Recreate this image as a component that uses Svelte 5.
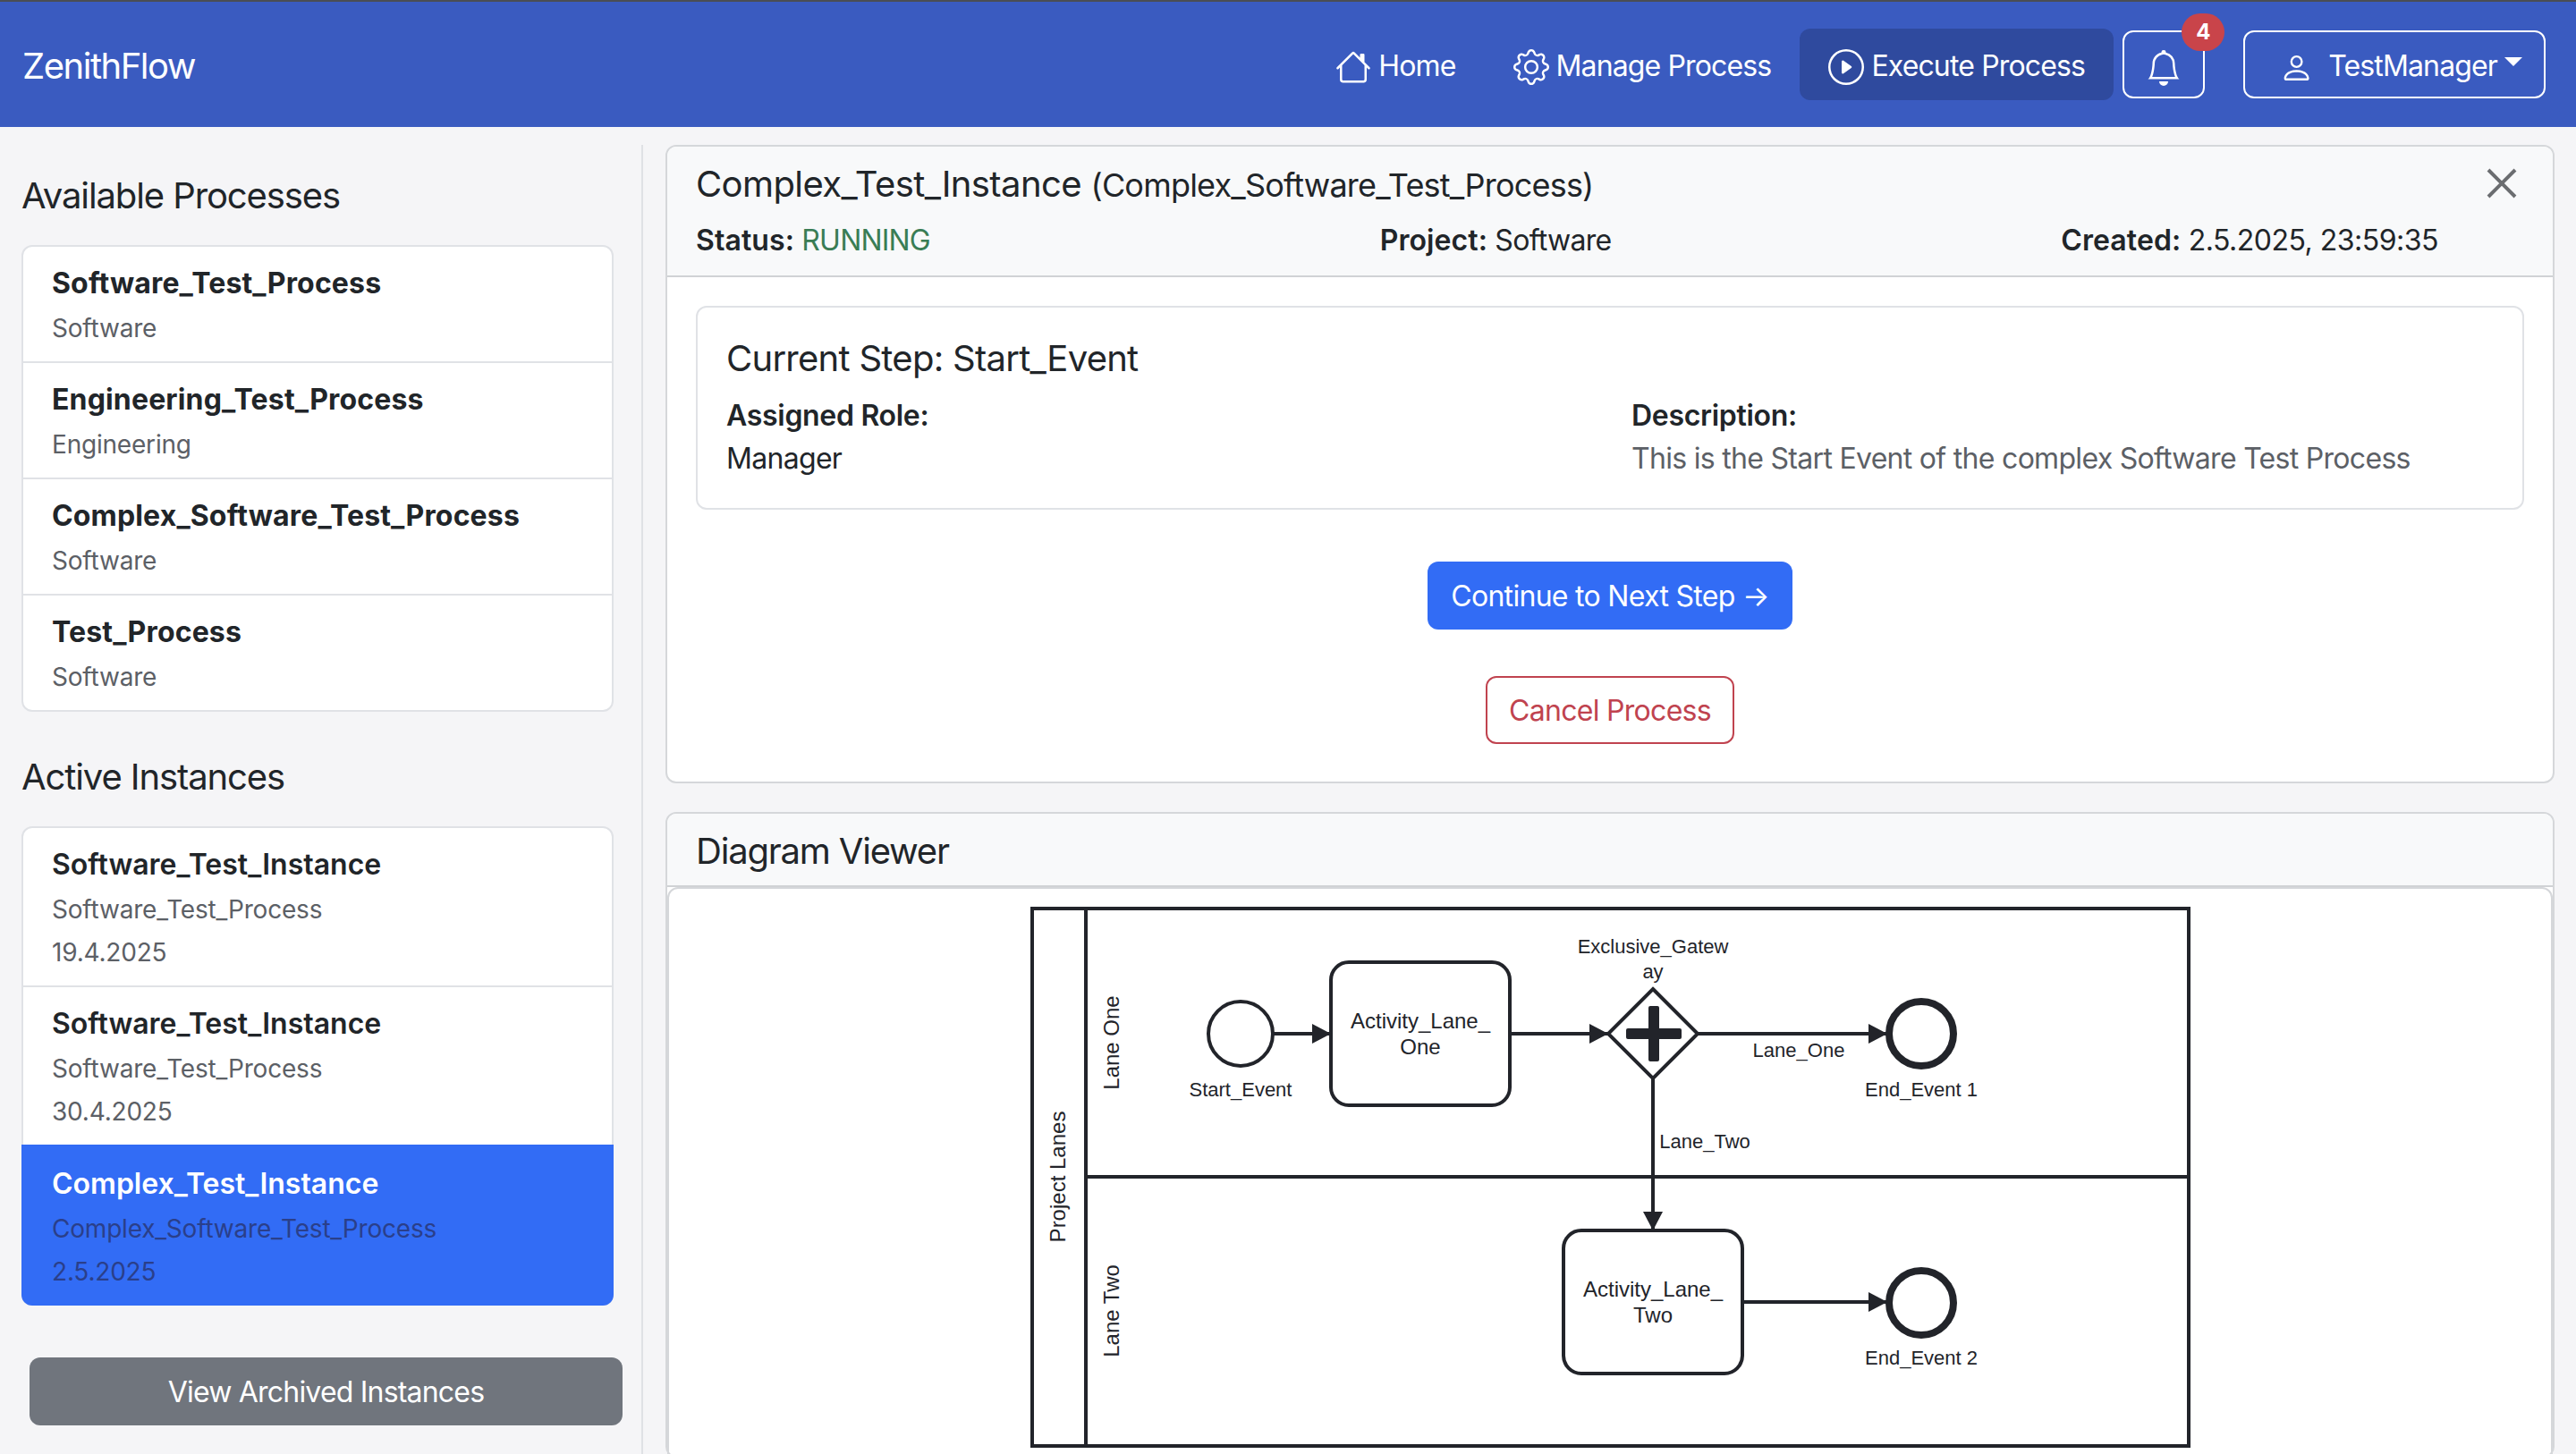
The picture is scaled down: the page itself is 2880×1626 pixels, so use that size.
<script lang="ts">
	const processes = [
		{name: 'Software_Test_Process', project: 'Software'},
		{name: 'Engineering_Test_Process', project: 'Engineering'},
		{name: 'Complex_Software_Test_Process', project: 'Software'},
		{name: 'Test_Process', project: 'Software'},
	];
	const instances = [
		{name: 'Software_Test_Instance', process: 'Software_Test_Process', date: '19.4.2025', active: false},
		{name: 'Software_Test_Instance', process: 'Software_Test_Process', date: '30.4.2025', active: false},
		{name: 'Complex_Test_Instance', process: 'Complex_Software_Test_Process', date: '2.5.2025', active: true},
	];
</script>

<div class="page">
	<nav class="navbar">
		<span class="brand">ZenithFlow</span>
		<div class="nav_right">
			<a class="nav_link" href="#home">
				<svg viewBox="0 0 16 16" class="icon"><path d="M8.707 1.5a1 1 0 0 0-1.414 0L.646 8.146a.5.5 0 0 0 .708.708L2 8.207V13.5A1.5 1.5 0 0 0 3.5 15h9a1.5 1.5 0 0 0 1.5-1.5V8.207l.646.647a.5.5 0 0 0 .708-.708L13 5.793V2.5a.5.5 0 0 0-.5-.5h-1a.5.5 0 0 0-.5.5v1.293zM13 7.207V13.5a.5.5 0 0 1-.5.5h-9a.5.5 0 0 1-.5-.5V7.207l5-5z" /></svg>
				<span>Home</span>
			</a>
			<a class="nav_link" href="#manage">
				<svg viewBox="0 0 16 16" class="icon"><path d="M8 4.754a3.246 3.246 0 1 0 0 6.492 3.246 3.246 0 0 0 0-6.492M5.754 8a2.246 2.246 0 1 1 4.492 0 2.246 2.246 0 0 1-4.492 0" /><path d="M9.796 1.343c-.527-1.79-3.065-1.79-3.592 0l-.094.319a.873.873 0 0 1-1.255.52l-.292-.16c-1.64-.892-3.433.902-2.54 2.541l.159.292a.873.873 0 0 1-.52 1.255l-.319.094c-1.79.527-1.79 3.065 0 3.592l.319.094a.873.873 0 0 1 .52 1.255l-.16.292c-.892 1.64.901 3.434 2.541 2.54l.292-.159a.873.873 0 0 1 1.255.52l.094.319c.527 1.79 3.065 1.79 3.592 0l.094-.319a.873.873 0 0 1 1.255-.52l.292.16c1.64.893 3.434-.902 2.54-2.541l-.159-.292a.873.873 0 0 1 .52-1.255l.319-.094c1.79-.527 1.79-3.065 0-3.592l-.319-.094a.873.873 0 0 1-.52-1.255l.16-.292c.893-1.64-.902-3.433-2.541-2.54l-.292.159a.873.873 0 0 1-1.255-.52zm-2.633.283c.246-.835 1.428-.835 1.674 0l.094.319a1.873 1.873 0 0 0 2.693 1.115l.291-.16c.764-.415 1.6.42 1.184 1.185l-.159.292a1.873 1.873 0 0 0 1.116 2.692l.318.094c.835.246.835 1.428 0 1.674l-.319.094a1.873 1.873 0 0 0-1.115 2.693l.16.291c.415.764-.42 1.6-1.185 1.184l-.291-.159a1.873 1.873 0 0 0-2.693 1.116l-.094.318c-.246.835-1.428.835-1.674 0l-.094-.319a1.873 1.873 0 0 0-2.692-1.115l-.292.16c-.764.415-1.6-.42-1.184-1.185l.159-.291A1.873 1.873 0 0 0 1.945 8.93l-.319-.094c-.835-.246-.835-1.428 0-1.674l.319-.094A1.873 1.873 0 0 0 3.06 4.377l-.16-.292c-.415-.764.42-1.6 1.185-1.184l.292.159a1.873 1.873 0 0 0 2.692-1.115z" /></svg>
				<span>Manage Process</span>
			</a>
			<a class="nav_link active" href="#execute">
				<svg viewBox="0 0 16 16" class="icon"><path d="M8 15A7 7 0 1 1 8 1a7 7 0 0 1 0 14m0 1A8 8 0 1 0 8 0a8 8 0 0 0 0 16" /><path d="M6.271 5.055a.5.5 0 0 1 .52.038l3.5 2.5a.5.5 0 0 1 0 .814l-3.5 2.5A.5.5 0 0 1 6 10.5v-5a.5.5 0 0 1 .271-.445" /></svg>
				<span>Execute Process</span>
			</a>
			<button class="outline bell">
				<svg viewBox="0 0 16 16" class="icon"><path d="M8 16a2 2 0 0 0 2-2H6a2 2 0 0 0 2 2M8 1.918l-.797.161A4 4 0 0 0 4 6c0 .628-.134 2.197-.459 3.742-.16.767-.376 1.566-.663 2.258h10.244c-.287-.692-.502-1.49-.663-2.258C12.134 8.197 12 6.628 12 6a4 4 0 0 0-3.203-3.92zM14.22 12c.223.447.481.801.78 1H1c.299-.199.557-.553.78-1C2.68 10.2 3 6.88 3 6c0-2.42 1.72-4.44 4.005-4.901a1 1 0 1 1 1.99 0A5 5 0 0 1 13 6c0 .88.32 4.2 1.22 6" /></svg>
				<span class="badge">4</span>
			</button>
			<button class="outline user">
				<svg viewBox="0 0 16 16" class="icon"><path d="M8 8a3 3 0 1 0 0-6 3 3 0 0 0 0 6m2-3a2 2 0 1 1-4 0 2 2 0 0 1 4 0m4 8c0 1-1 1-1 1H3s-1 0-1-1 1-4 6-4 6 3 6 4m-1-.004c-.001-.246-.154-.986-.832-1.664C11.516 10.68 10.289 10 8 10s-3.516.68-4.168 1.332c-.678.678-.83 1.418-.832 1.664z" /></svg>
				<span class="user_name">TestManager</span>
				<span class="caret"></span>
			</button>
		</div>
	</nav>

	<div class="content">
		<aside class="sidebar">
			<h2>Available Processes</h2>
			<div class="list processes">
				{#each processes as p}
					<div class="item">
						<div class="item_name">{p.name}</div>
						<div class="item_sub">{p.project}</div>
					</div>
				{/each}
			</div>
			<h2 class="second">Active Instances</h2>
			<div class="list">
				{#each instances as inst}
					<div class="item" class:active={inst.active}>
						<div class="item_name">{inst.name}</div>
						<div class="item_sub">{inst.process}</div>
						<div class="item_sub">{inst.date}</div>
					</div>
				{/each}
			</div>
			<button class="archive"><span>View Archived Instances</span></button>
		</aside>

		<main class="main">
			<section class="card">
				<header class="card_header tall">
					<h3>Complex_Test_Instance <small>(Complex_Software_Test_Process)</small></h3>
					<svg class="close" viewBox="0 0 34 34"><path d="M2 2 32 32M32 2 2 32" /></svg>
					<div class="meta">
						<span><b>Status:</b> <span class="running">RUNNING</span></span>
						<span><b>Project:</b> Software</span>
						<span><b>Created:</b> <span class="created">2.5.2025, 23:59:35</span></span>
					</div>
				</header>
				<div class="card_body">
					<div class="step">
						<h4>Current Step: Start_Event</h4>
						<div class="step_cols">
							<div>
								<b>Assigned Role:</b>
								<p>Manager</p>
							</div>
							<div>
								<b>Description:</b>
								<p class="muted">This is the Start Event of the complex Software Test Process</p>
							</div>
						</div>
					</div>
					<button class="primary"><span>Continue to Next Step →</span></button>
					<button class="danger"><span>Cancel Process</span></button>
				</div>
			</section>

			<section class="card diagram_card">
				<header class="card_header viewer_header">
					<h3 class="viewer">Diagram Viewer</h3>
				</header>
				<div class="diagram">
					<svg viewBox="748 994 2100 632" width="2100" height="632">
						<defs>
							<marker id="arrow" markerUnits="userSpaceOnUse" markerWidth="22" markerHeight="22" refX="21" refY="11" orient="auto">
								<path d="M0 0 21 11 0 22z" fill="#22242a" />
							</marker>
						</defs>
						<g fill="none" stroke="#22242a" stroke-width="4">
							<rect x="1154" y="1016" width="1293" height="601" />
							<path d="M1214 1016V1617M1214 1316H2447" />
							<circle cx="1387" cy="1156" r="36" fill="#fff" />
							<rect x="1488" y="1076" width="200" height="160" rx="20" fill="#fff" />
							<path d="M1848 1106 1898 1156 1848 1206 1798 1156z" fill="#fff" />
							<circle cx="2148" cy="1156" r="36" stroke-width="8" fill="#fff" />
							<rect x="1748" y="1376" width="200" height="160" rx="20" fill="#fff" />
							<circle cx="2148" cy="1457" r="36" stroke-width="8" fill="#fff" />
							<path d="M1423 1156H1488" marker-end="url(#arrow)" />
							<path d="M1688 1156H1798" marker-end="url(#arrow)" />
							<path d="M1898 1156H2110" marker-end="url(#arrow)" />
							<path d="M1848 1206V1376" marker-end="url(#arrow)" />
							<path d="M1948 1456H2110" marker-end="url(#arrow)" />
						</g>
						<g fill="#22242a">
							<rect x="1843" y="1125" width="12" height="62" rx="2" />
							<rect x="1818" y="1150" width="62" height="12" rx="2" />
						</g>
						<g class="labels" text-anchor="middle">
							<text x="1848" y="1066">Exclusive_Gatew</text>
							<text x="1848" y="1094">ay</text>
							<text x="1387" y="1226">Start_Event</text>
							<text x="2011" y="1182">Lane_One</text>
							<text x="2148" y="1226">End_Event 1</text>
							<text x="1906" y="1284">Lane_Two</text>
							<text x="2148" y="1526">End_Event 2</text>
						</g>
						<g class="labels lane" text-anchor="middle">
							<text x="1588" y="1150">Activity_Lane_</text>
							<text x="1588" y="1179">One</text>
							<text x="1848" y="1450">Activity_Lane_</text>
							<text x="1848" y="1479">Two</text>
							<text transform="translate(1251 1166) rotate(-90)">Lane One</text>
							<text transform="translate(1251 1466) rotate(-90)">Lane Two</text>
							<text transform="translate(1191 1316) rotate(-90)">Project Lanes</text>
						</g>
					</svg>
				</div>
			</section>
		</main>
	</div>
</div>

<style>
	:global(body) {
		margin: 0;
		background: #f5f5f7;
	}
	.page {
		height: 1626px;
		overflow: hidden;
		font-family: Inter, 'Liberation Sans', sans-serif;
		font-size: 32px;
		line-height: 48px;
		letter-spacing: -0.7px;
		color: #212529;
	}
	.navbar {
		height: 140px;
		border-top: 2px solid #4a4d55;
		background: #3a5bc0;
		color: #fff;
		display: flex;
		align-items: center;
		justify-content: space-between;
		padding: 0 34px 0 25px;
		box-sizing: content-box;
		letter-spacing: -0.86px;
	}
	.brand {
		font-size: 40px;
		letter-spacing: -1.47px;
		padding-top: 3px;
	}
	.nav_right {
		display: flex;
		align-items: center;
	}
	.nav_link {
		display: flex;
		align-items: center;
		gap: 8px;
		height: 80px;
		padding: 0 32px;
		color: #fff;
		text-decoration: none;
		border-radius: 12px;
	}
	.nav_link span,
	.user_name {
		padding-top: 3px;
	}
	.nav_link.active {
		background: #2f4a9e;
		margin-right: 10px;
	}
	.icon {
		width: 40px;
		height: 40px;
		fill: currentColor;
		margin-top: 6px;
	}
	button {
		font: inherit;
		letter-spacing: inherit;
		cursor: pointer;
	}
	button > span {
		display: block;
		padding-top: 2px;
	}
	.outline {
		position: relative;
		height: 76px;
		background: none;
		color: #fff;
		border: 2px solid #fff;
		border-radius: 12px;
		display: flex;
		align-items: center;
	}
	.outline .icon {
		margin-top: 8px;
	}
	.bell {
		width: 92px;
		justify-content: center;
		padding: 0;
	}
	.badge {
		position: absolute;
		top: -21px;
		left: 64px;
		width: 48px;
		height: 42px;
		border-radius: 21px;
		background: #c9444a;
		font-size: 24px;
		font-weight: 700;
		line-height: 42px;
		text-align: center;
		padding: 0 !important;
	}
	.user {
		margin-left: 43px;
		width: 338px;
		padding: 0 24px;
		gap: 17px;
	}
	.user .icon {
		margin-left: 15px;
	}
	.caret {
		width: 0;
		height: 0;
		border-top: 10px solid #fff;
		border-left: 10px solid transparent;
		border-right: 10px solid transparent;
		margin-left: -9px;
		margin-bottom: 6px;
		padding: 0 !important;
	}
	.content {
		display: flex;
		padding-top: 20px;
	}
	.sidebar {
		width: 719px;
		box-sizing: border-box;
		flex: none;
		height: 1464px;
		border-right: 2px solid #dfe1e5;
		padding: 32px 32px 0 24px;
	}
	h2 {
		font-size: 40px;
		line-height: 48px;
		font-weight: 400;
		letter-spacing: -1.1px;
		margin: 0 0 31px;
		padding-top: 1px;
	}
	h2.second {
		margin-top: 48px;
	}
	.list {
		width: 662px;
		box-sizing: border-box;
		border: 2px solid #e0e2e6;
		border-radius: 12px;
		background: #fff;
	}
	.item {
		padding: 17px 32px 13px;
		box-sizing: border-box;
		border-top: 2px solid #e0e2e6;
	}
	.item:first-child {
		border-top: 0;
	}
	.item.active {
		background: #326cf5;
		color: #fff;
		margin: 0 -2px -2px;
		padding: 20px 32px 14px 34px;
		border: 0;
		border-radius: 0 0 12px 12px;
	}
	.item_name {
		font-weight: 600;
		letter-spacing: 0;
		margin-bottom: 2px;
	}
	.processes .item_name {
		font-weight: 700;
		letter-spacing: 0.15px;
	}
	.item_sub {
		font-size: 28px;
		letter-spacing: -0.2px;
		color: #5c6066;
	}
	.item.active .item_sub {
		color: #2a3f8a;
	}
	.archive {
		display: block;
		margin: 58px 0 0 9px;
		width: 663px;
		height: 76px;
		background: #70757d;
		color: #fff;
		border: 0;
		border-radius: 12px;
		letter-spacing: -0.8px;
	}
	.main {
		flex: 1;
		min-width: 0;
		padding: 0 24px 0 25px;
	}
	.card {
		border: 2px solid #d5d7da;
		border-radius: 12px;
		background: #fff;
	}
	.card_header {
		position: relative;
		background: #f8f9fa;
		border-bottom: 2px solid #d0d2d5;
		border-radius: 10px 10px 0 0;
		padding: 16px 32px;
	}
	.card_header.tall {
		height: 146px;
		box-sizing: border-box;
		padding-top: 18px;
	}
	.card_header.viewer_header {
		padding: 18px 32px 14px;
	}
	h3 {
		margin: 0;
		font-size: 40px;
		line-height: 48px;
		font-weight: 400;
		letter-spacing: -0.6px;
	}
	h3.viewer {
		letter-spacing: -1.2px;
	}
	h3 small {
		font-size: 36px;
		letter-spacing: -0.8px;
	}
	.close {
		position: absolute;
		top: 24px;
		right: 40px;
		width: 34px;
		height: 34px;
		fill: none;
		stroke: #6b6d70;
		stroke-width: 4;
	}
	.meta {
		display: flex;
		justify-content: space-between;
		margin-top: 14px;
		padding-right: 96px;
	}
	.meta b {
		letter-spacing: 0.1px;
	}
	.created {
		letter-spacing: -0.5px;
	}
	b {
		font-weight: 600;
		letter-spacing: -0.3px;
	}
	.running {
		color: #3a7d55;
		letter-spacing: -0.8px;
	}
	.card_body {
		display: flex;
		flex-direction: column;
		align-items: center;
		padding: 32px 32px 42px;
	}
	.step {
		align-self: stretch;
		box-sizing: border-box;
		height: 228px;
		border: 2px solid #e0e2e6;
		border-radius: 12px;
		padding: 33px 32px 0;
	}
	h4 {
		margin: 0 0 16px;
		font-size: 40px;
		line-height: 48px;
		font-weight: 400;
		letter-spacing: -0.73px;
	}
	.step_cols {
		display: grid;
		grid-template-columns: 1012px 1fr;
	}
	p {
		margin: 0;
	}
	.muted {
		color: #5c6066;
	}
	.primary {
		margin-top: 58px;
		height: 76px;
		padding: 0 26px;
		background: #326cf5;
		color: #fff;
		border: 0;
		border-radius: 12px;
	}
	.danger {
		margin-top: 52px;
		height: 76px;
		padding: 0 24px;
		background: #fff;
		color: #c0434f;
		border: 2px solid #c0434f;
		border-radius: 12px;
	}
	.diagram_card {
		margin-top: 32px;
	}
	.diagram {
		margin: 0;
		height: 632px;
		border: 2px solid #d5d7da;
		border-radius: 12px 12px 0 0;
		overflow: hidden;
	}
	.diagram svg {
		display: block;
	}
	.labels {
		font-family: 'Liberation Sans', Arial, sans-serif;
		font-size: 22px;
		letter-spacing: 0;
		fill: #22242a;
	}
	.lane {
		font-size: 24px;
	}
</style>
